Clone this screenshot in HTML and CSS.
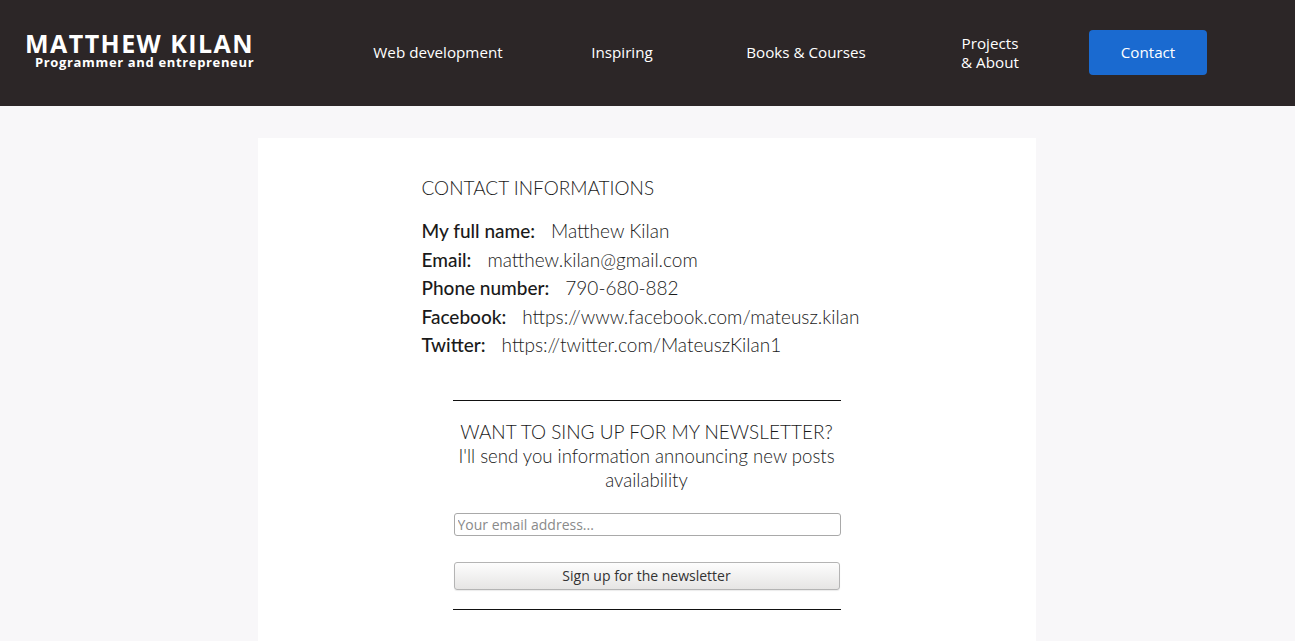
FILE: index.html
```html
<!DOCTYPE html>
<html lang="en">
<head>
<meta charset="utf-8">
<title>Contact - Matthew Kilan</title>
<link rel="stylesheet" href="styles.css">
</head>
<body>
<header class="topbar">
  <div class="logo">
    <div class="logo-name">MATTHEW KILAN</div>
    <div class="logo-sub">Programmer and entrepreneur</div>
  </div>
  <nav class="nav">
    <a class="nav-item" href="#">Web development</a>
    <a class="nav-item" href="#">Inspiring</a>
    <a class="nav-item" href="#">Books &amp; Courses</a>
    <a class="nav-item" href="#">Projects<br>&amp; About</a>
    <a class="nav-btn" href="#">Contact</a>
  </nav>
</header>
<main class="page">
  <section class="card">
    <div class="contact">
      <h1 class="contact-title">CONTACT INFORMATIONS</h1>
      <ul class="info">
        <li><span class="label">My full name:</span><span class="value">Matthew Kilan</span></li>
        <li><span class="label">Email:</span><span class="value">matthew.kilan@gmail.com</span></li>
        <li><span class="label">Phone number:</span><span class="value">790-680-882</span></li>
        <li><span class="label">Facebook:</span><span class="value">https://www.facebook.com/mateusz.kilan</span></li>
        <li><span class="label">Twitter:</span><span class="value">https://twitter.com/MateuszKilan1</span></li>
      </ul>
    </div>
    <div class="newsletter">
      <hr class="rule">
      <h2 class="nl-title">WANT TO SING UP FOR MY NEWSLETTER?</h2>
      <p class="nl-text">I'll send you information announcing new posts availability</p>
      <input class="nl-input" type="email" placeholder="Your email address...">
      <button class="nl-btn" type="button">Sign up for the newsletter</button>
      <hr class="rule">
    </div>
  </section>
</main>
</body>
</html>
```
FILE: styles.css
```css
* { box-sizing: border-box; }
html, body { margin: 0; padding: 0; }
body {
  background: #f8f7f9;
  font-family: Lato, "Liberation Sans", sans-serif;
  color: #1a1a1a;
  height: 641px;
  overflow: hidden;
}
.topbar {
  height: 106px;
  background: #2c2627;
  display: flex;
  align-items: center;
  padding-left: 25px;
  font-family: "Open Sans", "Noto Sans", sans-serif;
  color: #fff;
}
.logo {
  display: flex;
  flex-direction: column;
  width: 321px;
  margin-top: -5px;
}
.logo-name {
  font-weight: 700;
  font-size: 25px;
  line-height: 23px;
  letter-spacing: 1.45px;
  white-space: nowrap;
}
.logo-sub {
  font-weight: 700;
  font-size: 13px;
  line-height: 15px;
  padding-left: 10px;
  letter-spacing: 0.65px;
  white-space: nowrap;
}
.nav {
  display: flex;
  align-items: center;
}
.nav-item {
  width: 184px;
  text-align: center;
  color: #fff;
  text-decoration: none;
  font-size: 15.2px;
  line-height: 19px;
  margin-top: -1px;
}
.nav-btn {
  margin-left: 7px;
  margin-top: -2px;
  width: 118px;
  height: 45px;
  border-radius: 4px;
  background: #1a6ad0;
  color: #fff;
  text-decoration: none;
  font-size: 15.2px;
  display: flex;
  align-items: center;
  justify-content: center;
}
.page {
  padding-top: 32px;
}
.card {
  width: 778px;
  margin: 0 auto;
  background: #fff;
  padding: 36px 0 40px;
  display: flex;
  flex-direction: column;
  align-items: center;
  position: relative;
  left: -1px;
}
.contact {
  align-self: stretch;
  padding-left: 164px;
}
.contact-title {
  margin: 0 0 15px;
  font-weight: 300;
  font-size: 19px;
  line-height: 28px;
}
.info {
  list-style: none;
  margin: 0;
  padding: 0;
}
.info li {
  font-size: 19px;
  line-height: 28.5px;
  display: flex;
  gap: 16px;
}
.label { font-weight: 500; }
.value { font-weight: 300; }
.newsletter {
  width: 388px;
  margin-top: 40px;
  display: flex;
  flex-direction: column;
  align-items: center;
  text-align: center;
}
.rule {
  align-self: stretch;
  margin: 0;
  border: 0;
  border-top: 1px solid #111;
}
.nl-title {
  margin: 19px 0 0;
  font-weight: 300;
  font-size: 19px;
  line-height: 24px;
}
.nl-text {
  margin: 0;
  font-weight: 300;
  font-size: 18.6px;
  line-height: 24px;
}
.nl-input {
  align-self: stretch;
  margin: 21px 0 0 1px;
  height: 23px;
  border: 1px solid #a9a9a9;
  border-radius: 3px;
  padding: 0 3px;
  font-family: "Open Sans", "Noto Sans", sans-serif;
  font-size: 14px;
  color: #333;
}
.nl-input::placeholder { color: #8a8a8a; }
.nl-btn {
  align-self: stretch;
  margin: 26px 1px 0 1px;
  height: 28px;
  border: 1px solid #b4b4b4;
  border-radius: 3px;
  background: linear-gradient(#fdfdfd, #e6e5e4);
  font-family: "Open Sans", "Noto Sans", sans-serif;
  font-size: 14px;
  color: #333;
  box-shadow: 0 1px 1px rgba(0,0,0,0.08);
}
.newsletter .rule:last-child { margin-top: 19px; }
```
